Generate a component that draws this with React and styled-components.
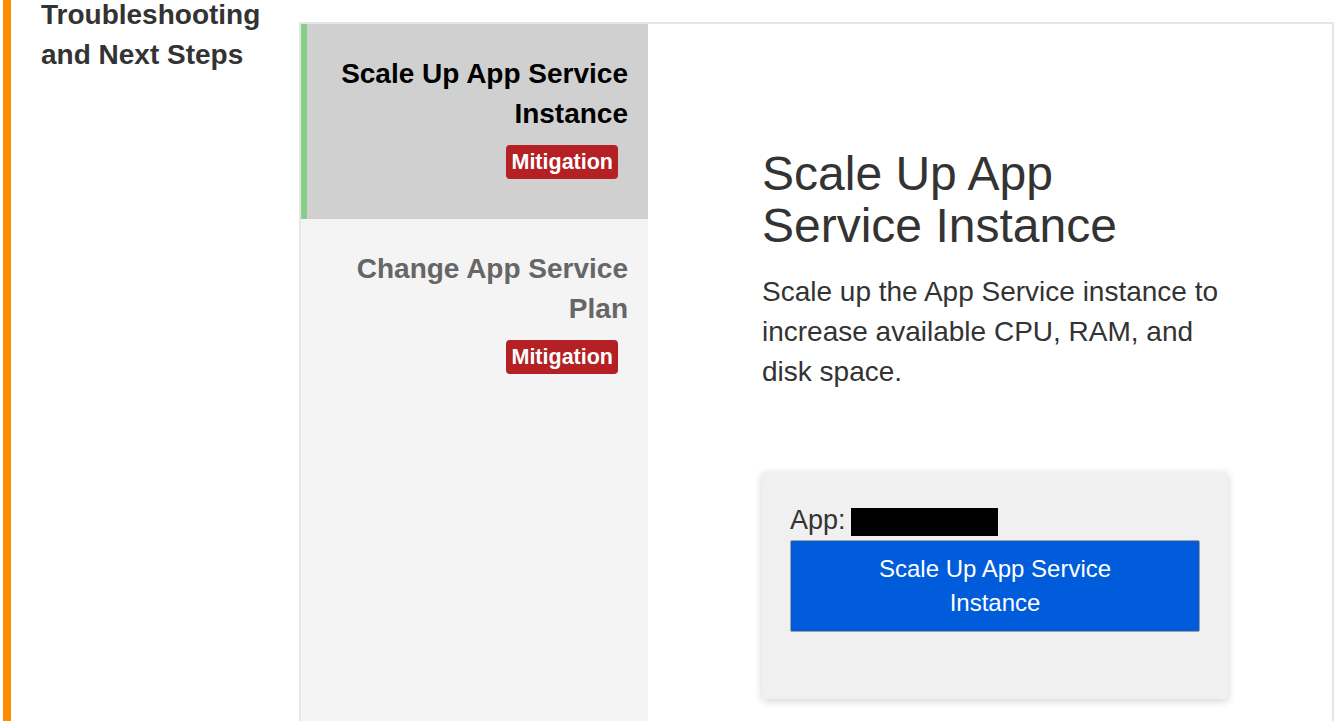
import React from 'react';
import styled, { createGlobalStyle } from 'styled-components';

const GlobalStyle = createGlobalStyle`
  html, body {
    margin: 0;
    padding: 0;
    background: #ffffff;
    overflow: hidden;
  }
  body {
    font-family: "Liberation Sans", Arial, sans-serif;
  }
`;

const Page = styled.div`
  display: flex;
  height: 721px;
  padding-left: 3px;
  padding-right: 1px;
  box-sizing: border-box;
`;

const Section = styled.div`
  display: flex;
  flex: 1;
  border-left: 8px solid #ff8c00;
`;

const SectionTitle = styled.h2`
  width: 258px;
  flex-shrink: 0;
  margin: -5px 0 0;
  padding: 0 0 0 30px;
  font-size: 28px;
  line-height: 40px;
  font-weight: bold;
  color: #333333;
`;

const Box = styled.div`
  flex: 1;
  display: flex;
  margin-top: 22px;
  border: 2px solid #e6e6e6;
  border-bottom: none;
  background: #ffffff;
`;

const SideNav = styled.div`
  width: 347px;
  flex-shrink: 0;
  background: #f4f4f4;
`;

const NavItem = styled.div`
  padding: 30px 20px 40px 20px;
  text-align: right;
  background: ${p => (p.$active ? '#d0d0d0' : 'transparent')};
  border-left: 6px solid ${p => (p.$active ? '#85d085' : 'transparent')};
  cursor: pointer;
`;

const NavTitle = styled.div`
  font-size: 28px;
  line-height: 40px;
  font-weight: bold;
  color: ${p => (p.$active ? '#000000' : '#666666')};
`;

const Badge = styled.span`
  display: inline-block;
  margin: 11px 10px 0 0;
  padding: 0 5px;
  height: 34px;
  line-height: 34px;
  border-radius: 4px;
  background: #b52025;
  color: #ffffff;
  font-size: 21.5px;
  font-weight: bold;
`;

const Detail = styled.div`
  flex: 1;
  padding: 124px 0 0 114px;
`;

const Column = styled.div`
  width: 466px;
`;

const Heading = styled.h1`
  max-width: 460px;
  margin: 0 0 20px;
  font-size: 48px;
  line-height: 52px;
  font-weight: normal;
  color: #333333;
`;

const Description = styled.p`
  margin: 0 0 80px;
  font-size: 28px;
  line-height: 40px;
  color: #333333;
`;

const Card = styled.div`
  padding: 28px 28px 67px;
  background: #f0f0f0;
  border-radius: 4px;
  box-shadow: 0 2px 8px rgba(0, 0, 0, 0.18);
`;

const AppLine = styled.div`
  display: flex;
  align-items: center;
  gap: 5px;
  font-size: 27px;
  line-height: 40px;
  color: #333333;
`;

const Redacted = styled.span`
  display: inline-block;
  width: 147px;
  height: 28px;
  background: #000000;
  margin-top: 4px;
`;

const ActionButton = styled.button`
  display: block;
  width: 100%;
  padding: 11px 70px;
  border: 1px solid #a0a0a0;
  border-radius: 2px;
  background: #005cdb;
  color: #ffffff;
  font-family: "Liberation Sans", Arial, sans-serif;
  font-size: 24px;
  line-height: 34px;
  text-align: center;
  cursor: pointer;
`;

const steps = [
  { id: 'scale-up', title: 'Scale Up App Service Instance', tag: 'Mitigation' },
  { id: 'change-plan', title: 'Change App Service Plan', tag: 'Mitigation' },
];

export default function App() {
  const active = steps[0];
  return (
    <>
      <GlobalStyle />
      <Page>
        <Section>
          <SectionTitle>Troubleshooting and Next Steps</SectionTitle>
          <Box>
            <SideNav>
              {steps.map(step => (
                <NavItem key={step.id} $active={step.id === active.id}>
                  <NavTitle $active={step.id === active.id}>{step.title}</NavTitle>
                  <Badge>{step.tag}</Badge>
                </NavItem>
              ))}
            </SideNav>
            <Detail>
              <Column>
                <Heading>{active.title}</Heading>
                <Description>
                  Scale up the App Service instance to increase available CPU, RAM, and disk space.
                </Description>
                <Card>
                  <AppLine>
                    App:<Redacted />
                  </AppLine>
                  <ActionButton>Scale Up App Service Instance</ActionButton>
                </Card>
              </Column>
            </Detail>
          </Box>
        </Section>
      </Page>
    </>
  );
}
